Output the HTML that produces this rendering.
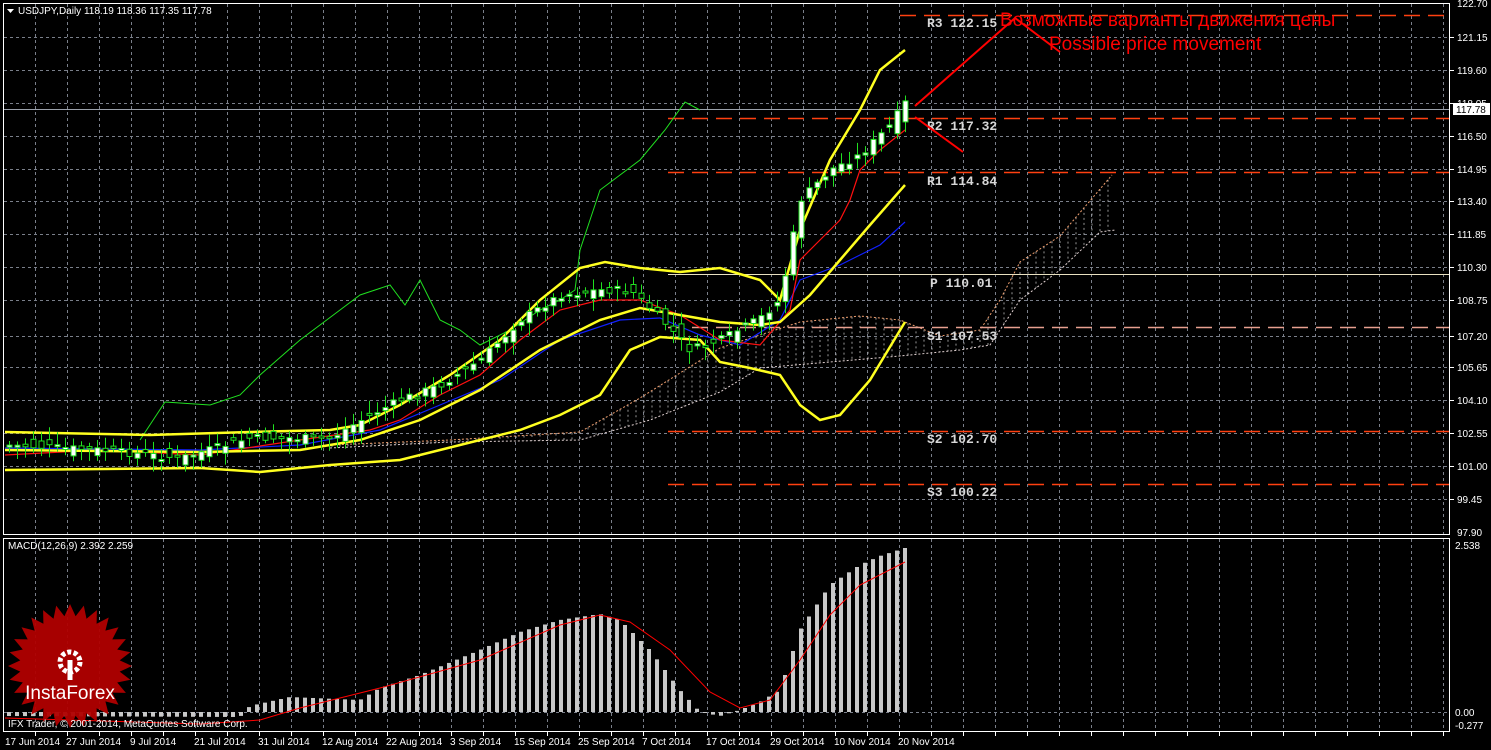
<!DOCTYPE html>
<html><head><meta charset="utf-8"><style>
html,body{margin:0;padding:0;background:#000;width:1491px;height:750px;overflow:hidden}
svg{display:block;font-family:"Liberation Sans","DejaVu Sans",sans-serif}
.ax{fill:#fff;font-size:10px}
.lv{fill:#d8d8d8;font-family:"Liberation Mono","DejaVu Sans Mono",monospace;font-size:13px;font-weight:bold}
</style></head><body>
<svg id="s" width="1491" height="750" viewBox="0 0 1491 750">
<rect width="1491" height="750" fill="#000"/>
<g id="grid"></g>
<g id="cloud"></g>
<g id="lvls"></g>
<g id="ind"></g>
<g id="cndl"></g>
<g id="macd"></g>
<g transform="translate(70,666)">
<polygon id="star" fill="#b00000" opacity="0.95"></polygon>
<g fill="#fff">
<circle cx="0" cy="-4" r="10" fill="none" stroke="#fff" stroke-width="5" stroke-dasharray="4 2.3"/>
<rect x="-2.5" y="-6" width="5" height="20"/>
</g>
<text x="0" y="33" text-anchor="middle" fill="#fff" font-size="19" font-family="Liberation Sans,sans-serif">InstaForex</text>
</g>
<rect x="3.5" y="3.5" width="1446" height="531" fill="none" stroke="#fff"/>
<rect x="3.5" y="538.5" width="1446" height="193" fill="none" stroke="#fff"/>
<polygon points="7,9 14,9 10.5,13" fill="#fff"/>
<text x="18" y="14" class="ax" fill="#fff">USDJPY,Daily  118.19 118.36 117.35 117.78</text>
<text x="8" y="549" class="ax">MACD(12,26,9) 2.392 2.259</text>
<text x="8" y="727" class="ax">IFX Trader, © 2001-2014, MetaQuotes Software Corp.</text>
<g class="ax">
<text x="1457" y="7">122.70</text><text x="1457" y="41">121.15</text><text x="1457" y="74">119.60</text>
<text x="1457" y="107">118.05</text><text x="1457" y="140">116.50</text><text x="1457" y="173">114.95</text>
<text x="1457" y="205">113.40</text><text x="1457" y="238">111.85</text><text x="1457" y="271">110.30</text>
<text x="1457" y="304">108.75</text><text x="1457" y="340">107.20</text><text x="1457" y="371">105.65</text>
<text x="1457" y="404">104.10</text><text x="1457" y="437">102.55</text><text x="1457" y="470">101.00</text>
<text x="1457" y="503">99.45</text><text x="1457" y="536">97.90</text>
<text x="1455" y="549">2.538</text><text x="1455" y="716">0.00</text><text x="1455" y="729">-0.277</text>
</g>
<rect x="1453" y="103" width="37" height="12" fill="#fff"/>
<text x="1456" y="113" font-size="10" fill="#000">117.78</text>
<g class="ax">
<text x="5" y="745">17 Jun 2014</text><text x="66" y="745">27 Jun 2014</text><text x="130" y="745">9 Jul 2014</text>
<text x="194" y="745">21 Jul 2014</text><text x="258" y="745">31 Jul 2014</text><text x="322" y="745">12 Aug 2014</text>
<text x="386" y="745">22 Aug 2014</text><text x="450" y="745">3 Sep 2014</text><text x="514" y="745">15 Sep 2014</text>
<text x="578" y="745">25 Sep 2014</text><text x="642" y="745">7 Oct 2014</text><text x="706" y="745">17 Oct 2014</text>
<text x="770" y="745">29 Oct 2014</text><text x="834" y="745">10 Nov 2014</text><text x="898" y="745">20 Nov 2014</text>
</g>
<text class="lv" x="927" y="27">R3 122.15</text>
<text class="lv" x="927" y="130">R2 117.32</text>
<text class="lv" x="927" y="185">R1 114.84</text>
<text class="lv" x="930" y="287">P 110.01</text>
<text class="lv" x="927" y="340">S1 107.53</text>
<text class="lv" x="927" y="443">S2 102.70</text>
<text class="lv" x="927" y="496">S3 100.22</text>
<polyline points="915,106 1015,18 1060,52" fill="none" stroke="#f00" stroke-width="2"/>
<line x1="915" y1="117" x2="963" y2="152" stroke="#f00" stroke-width="2"/>
<text x="1000" y="26" fill="#f00" font-size="19">Возможные варианты движения цены</text>
<text x="1049" y="50" fill="#f00" font-size="19">Possible price movement</text>
</svg>
<script>
var NS="http://www.w3.org/2000/svg";
function el(p,t,a){var e=document.createElementNS(NS,t);for(var k in a)e.setAttribute(k,a[k]);document.getElementById(p).appendChild(e);return e;}
(function(){
for(var x=35;x<1450;x+=32){el("grid","line",{x1:x+.5,y1:4,x2:x+.5,y2:534,stroke:"#7a7f8a","stroke-dasharray":"3 3"});el("grid","line",{x1:x+.5,y1:539,x2:x+.5,y2:731,stroke:"#7a7f8a","stroke-dasharray":"3 3"});el("grid","line",{x1:x+.5,y1:732,x2:x+.5,y2:736,stroke:"#fff"});}
var hy=[37,70,103,136,169,201,234,267,300,336,367,400,433,466,499];
hy.forEach(function(y){el("grid","line",{x1:4,y1:y+.5,x2:1449,y2:y+.5,stroke:"#7a7f8a","stroke-dasharray":"3 3"});el("grid","line",{x1:1450,y1:y+.5,x2:1454,y2:y+.5,stroke:"#fff"});});
el("grid","line",{x1:4,y1:712.5,x2:1449,y2:712.5,stroke:"#7a7f8a","stroke-dasharray":"3 3"});
[[15,900],[118,668],[172,668],[431,668],[484,668]].forEach(function(l){el("lvls","line",{x1:l[1],y1:l[0]+.5,x2:1449,y2:l[0]+.5,stroke:"#ff4010","stroke-width":1.5,"stroke-dasharray":"16 8"});});
el("lvls","line",{x1:668,y1:327.5,x2:1449,y2:327.5,stroke:"#e8a090","stroke-width":1.5,"stroke-dasharray":"16 8"});
el("lvls","line",{x1:668,y1:274.5,x2:1449,y2:274.5,stroke:"#e8e0c0"});
el("lvls","line",{x1:4,y1:109.5,x2:1449,y2:109.5,stroke:"#9aa0aa"});
function interp(pts,x){if(x<=pts[0][0])return pts[0][1];for(var i=0;i<pts.length-1;i++){if(x>=pts[i][0]&&x<=pts[i+1][0]){var t=(x-pts[i][0])/(pts[i+1][0]-pts[i][0]);return pts[i][1]+t*(pts[i+1][1]-pts[i][1]);}}return pts[pts.length-1][1];}
function pl(pts){return pts.map(function(p){return p.join(",")}).join(" ");}
var cu=[[330,445],[450,440],[580,432],[640,398],[720,348],[800,322],[860,316],[900,320],[940,336],[980,330],[1000,300],[1020,262],[1060,236],[1112,175]];
var cl=[[330,448],[450,442],[580,440],[650,420],[720,392],[760,368],[900,356],[960,350],[990,345],[1020,300],[1060,270],[1100,232],[1115,230]];
for(var x=332;x<=1112;x+=8){var a=interp(cu,x),b=interp(cl,x);if(b-a>1)el("cloud","line",{x1:x,y1:a,x2:x,y2:b,stroke:"#bbbbbb","stroke-width":0.8,"stroke-dasharray":"2 3"});}
el("cloud","polyline",{points:pl(cu),fill:"none",stroke:"#f0a070","stroke-dasharray":"2 2"});
el("cloud","polyline",{points:pl(cl),fill:"none",stroke:"#e0d0d0","stroke-dasharray":"2 2"});
var g=[[140,440],[165,402],[210,405],[240,395],[260,375],[300,340],[340,310],[360,295],[390,285],[405,305],[420,280],[440,320],[460,330],[480,345],[510,330],[540,310],[560,300],[575,290],[580,250],[600,190],[640,160],[665,130],[685,102],[700,110]];
el("ind","polyline",{points:pl(g),fill:"none",stroke:"#20e020"});
var bu=[[5,432],[150,435],[250,432],[330,430],[360,425],[400,405],[450,375],[500,340],[540,300],[580,268],[605,262],[640,268],[680,272],[720,268],[760,280],[780,300],[800,230],[830,160],[860,110],[880,70],[905,50]];
var bl=[[5,470],[200,468],[260,472],[330,465],[400,460],[460,445],[520,430],[560,415],[600,395],[630,350],[660,337],[700,340],[720,362],[750,368],[780,375],[800,405],[820,420],[840,415],[870,380],[905,322]];
var bm=[[5,450],[200,452],[300,450],[360,440],[420,420],[480,390],[540,350],[600,320],[640,308],[680,315],[720,322],[760,325],[780,322],[810,295],[840,260],[870,225],[905,185]];
var rd=[[5,455],[100,450],[200,455],[300,440],[370,430],[400,420],[440,395],[480,375],[520,340],[560,310],[600,300],[640,300],[680,315],[720,340],[760,345],[790,310],[800,260],[820,240],[840,220],[850,200],[860,170],[880,150],[905,130]];
var bb=[[5,448],[200,450],[300,445],[380,430],[440,405],[500,380],[560,340],[620,320],[660,318],[700,335],[740,345],[780,320],[800,280],[840,265],[860,255],[880,245],[905,222]];
el("ind","polyline",{points:pl(bb),fill:"none",stroke:"#1020ff","stroke-width":1.2});
el("ind","polyline",{points:pl(rd),fill:"none",stroke:"#ff1010","stroke-width":1.2});
[bu,bl,bm].forEach(function(p){el("ind","polyline",{points:pl(p),fill:"none",stroke:"#ffff20","stroke-width":2.5});});
var cp=[[5,445],[100,450],[180,458],[250,438],[330,438],[370,415],[400,400],[440,385],[480,360],[520,320],[560,295],[600,290],[630,290],[660,318],[690,350],[720,340],[760,318],[780,300],[800,200],[830,170],[860,155],[890,125],[905,103]];
var seed=7;function rnd(){seed=(seed*9301+49297)%233280;return seed/233280;}
for(var x=9;x<=905;x+=8){var cc=interp(cp,x)+(rnd()-.5)*8,oo=interp(cp,x-8)+(rnd()-.5)*16;var t1=Math.min(oo,cc),b1=Math.max(oo,cc);if(b1-t1<2)b1=t1+2;
el("cndl","line",{x1:x+.5,y1:(t1-3-rnd()*10).toFixed(1),x2:x+.5,y2:(b1+3+rnd()*10).toFixed(1),stroke:"#20e020"});
el("cndl","rect",{x:x-2,y:t1.toFixed(1),width:5,height:(b1-t1).toFixed(1),fill:cc<oo?"#fff":"#000",stroke:"#20e020"});}
var mh=[[5,716],[240,717],[250,706],[290,697],[360,700],[380,688],[420,675],[480,650],[520,632],[560,620],[600,614],[620,620],[650,650],[680,690],[700,712],[720,716],[740,710],[760,702],[780,690],[800,630],[830,585],[860,565],[880,556],[905,548]];
var sg=[[5,718],[200,724],[260,720],[300,708],[380,688],[480,660],[560,625],[600,615],[630,622],[670,650],[710,692],[740,708],[770,700],[800,660],[830,615],[860,585],[905,562]];
for(var x=9;x<=905;x+=8){var y=interp(mh,x);el("macd","rect",{x:x-2,y:Math.min(y,712),width:4,height:Math.max(1,Math.abs(712-y)),fill:"#c8c8c8"});}
el("macd","polyline",{points:pl(sg),fill:"none",stroke:"#f00"});
var s=[];for(var i=0;i<56;i++){var r=i%2?50:62,an=i*Math.PI/28;s.push((r*Math.cos(an)).toFixed(1)+","+(r*Math.sin(an)).toFixed(1));}
document.getElementById("star").setAttribute("points",s.join(" "));
})();
</script>
</body></html>
